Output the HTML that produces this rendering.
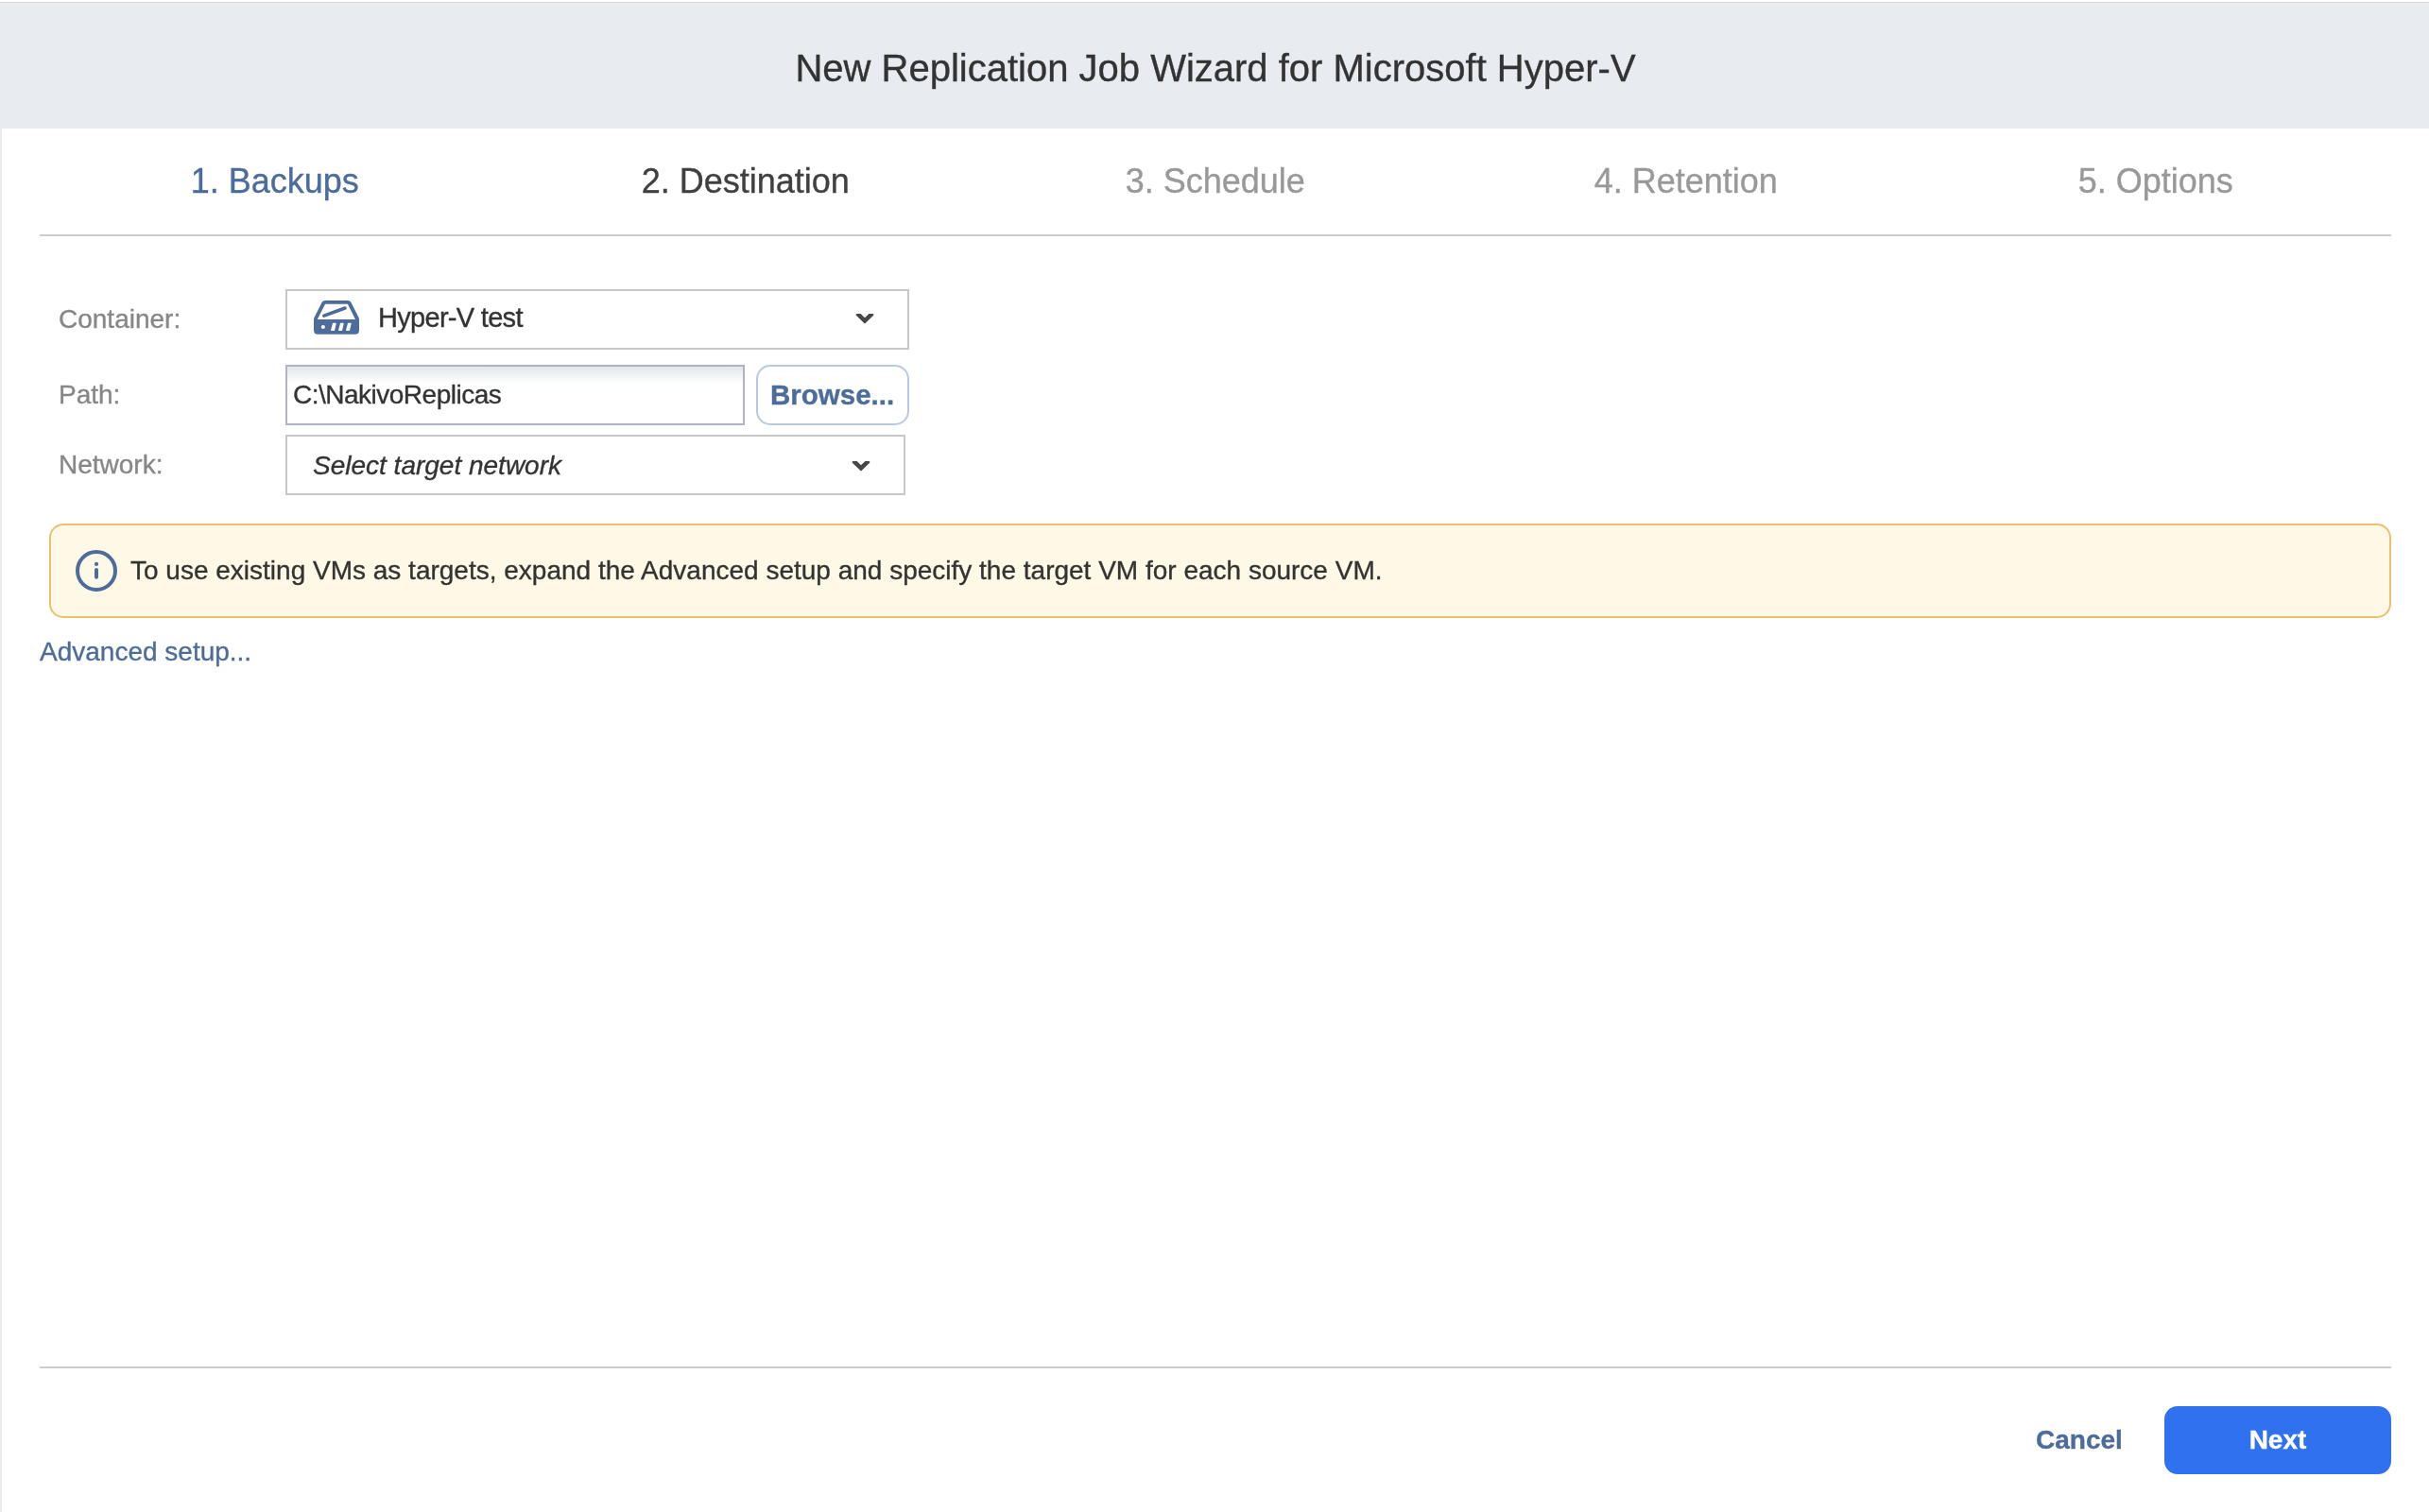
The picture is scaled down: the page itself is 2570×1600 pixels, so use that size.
<!DOCTYPE html>
<html>
<head>
<meta charset="utf-8">
<style>
html,body{margin:0;padding:0;}
body{width:2570px;height:1600px;position:relative;overflow:hidden;background:#ffffff;font-family:"Liberation Sans",sans-serif;}
.abs{position:absolute;white-space:nowrap;line-height:1;will-change:transform;-webkit-text-stroke:0.35px currentColor;}
#topline{position:absolute;left:0;top:2px;width:2570px;height:1px;background:#d4d4d4;}
#header{position:absolute;left:0;top:4px;width:2570px;height:132px;background:#e8ebf0;}
#topline2{position:absolute;left:0;top:3px;width:2570px;height:1px;background:#eff0f1;}
#leftbar{position:absolute;left:0;top:136px;width:2px;height:1464px;background:#e8ebf0;}
#title{left:0;width:2572px;text-align:center;top:51.8px;font-size:40px;color:#333333;}
.step{top:173.6px;font-size:36px;width:497.6px;text-align:center;}
.sep{position:absolute;left:42px;width:2488px;height:2px;background:#cccccc;}
.label{font-size:28px;color:#878787;left:62px;}
.box{position:absolute;box-sizing:border-box;border:2px solid #c8c8c8;background:#fff;}
.inp{font-size:28px;color:#333333;}
.chev{position:absolute;}
#banner{position:absolute;left:52px;top:554px;width:2478px;height:100px;box-sizing:border-box;border:2px solid #e8c270;border-radius:15px;background:#fdf9e6;}
.link{color:#4c6c9b;}
#next{position:absolute;left:2290px;top:1488px;width:240px;height:72px;border-radius:14px;background:#2f71ef;}
</style>
</head>
<body>
<div id="topline"></div><div id="topline2"></div>
<div id="header"></div>
<div id="leftbar"></div>
<div id="title" class="abs">New Replication Job Wizard for Microsoft Hyper-V</div>

<div class="abs step" style="left:42px;color:#4c6c9b;">1. Backups</div>
<div class="abs step" style="left:539.6px;color:#404040;">2. Destination</div>
<div class="abs step" style="left:1037.2px;color:#999999;">3. Schedule</div>
<div class="abs step" style="left:1534.8px;color:#999999;">4. Retention</div>
<div class="abs step" style="left:2032.4px;color:#999999;">5. Options</div>
<div class="sep" style="top:248px;"></div>

<div class="abs label" style="top:324px;">Container:</div>
<div class="abs label" style="top:404px;">Path:</div>
<div class="abs label" style="top:478px;">Network:</div>

<div class="box" style="left:302px;top:306px;width:660px;height:64px;"></div>
<svg style="position:absolute;left:326px;top:312px;" width="60" height="48" viewBox="0 0 60 48">
  <g fill="#4d6c9b">
    <path d="M18 6 H42 Q44.5 6 45.6 8.3 L53.6 24.3 Q54 25 54 26.5 V37.5 Q54 41.7 49.8 41.7 H10.2 Q6 41.7 6 37.5 V26.5 Q6 25 6.4 24.3 L14.4 8.3 Q15.5 6 18 6 Z M18.1 9.8 L9.8 26 H50 L41.9 9.8 Z"/>
    <circle cx="15.9" cy="34" r="2.1" fill="#fff"/>
  </g>
  <line x1="16.8" y1="22.2" x2="39" y2="14" stroke="#4d6c9b" stroke-width="3.5" stroke-linecap="round"/>
  <g fill="#fff">
    <path d="M26.5 30.4 H29.1 L27.5 37.3 H24.7 Z" stroke="#fff" stroke-width="1.2" stroke-linejoin="round"/>
    <path d="M34.5 30.4 H37.1 L35.5 37.3 H32.7 Z" stroke="#fff" stroke-width="1.2" stroke-linejoin="round"/>
    <path d="M42.5 30.4 H45.1 L43.5 37.3 H40.7 Z" stroke="#fff" stroke-width="1.2" stroke-linejoin="round"/>
  </g>
</svg>
<div class="abs inp" style="left:400px;top:322.3px;font-size:29px;letter-spacing:-0.7px;">Hyper-V test</div>
<svg class="chev" style="left:900px;top:326px;" width="30" height="22" viewBox="0 0 30 22">
  <path d="M5.6 7.4 Q5.4 6.2 6.6 6.1 L10.6 5.9 L15 10.3 L19.4 5.9 L23.4 6.1 Q24.6 6.2 24.4 7.4 L15.6 16.1 Q15 16.7 14.4 16.1 Z" fill="#464646"/>
</svg>

<div class="box" style="left:302px;top:386px;width:486px;height:64px;border-color:#b0b2c6;background:linear-gradient(#e3e7e9,#ffffff 18px);"></div>
<div class="abs inp" style="left:310px;top:404px;letter-spacing:-0.5px;">C:\NakivoReplicas</div>
<div class="box" style="left:800px;top:386px;width:162px;height:64px;border-color:#b9c9e0;border-radius:15px;"></div>
<div class="abs" style="left:815px;top:403px;font-size:29.5px;font-weight:bold;color:#4c6c9b;">Browse...</div>

<div class="box" style="left:302px;top:460px;width:656px;height:64px;"></div>
<div class="abs inp" style="left:331px;top:479px;font-style:italic;">Select target network</div>
<svg class="chev" style="left:896px;top:482px;" width="30" height="22" viewBox="0 0 30 22">
  <path d="M5.6 7.4 Q5.4 6.2 6.6 6.1 L10.6 5.9 L15 10.3 L19.4 5.9 L23.4 6.1 Q24.6 6.2 24.4 7.4 L15.6 16.1 Q15 16.7 14.4 16.1 Z" fill="#464646"/>
</svg>

<div id="banner"></div>
<svg style="position:absolute;left:70px;top:570px;" width="65" height="70" viewBox="0 0 65 70">
  <circle cx="32" cy="34" r="20" fill="none" stroke="#4d6c9b" stroke-width="4"/>
  <circle cx="32" cy="26.9" r="2.1" fill="#4d6c9b"/>
  <line x1="32" y1="33" x2="32" y2="40.8" stroke="#4d6c9b" stroke-width="4" stroke-linecap="round"/>
</svg>
<div class="abs" style="left:138px;top:590px;font-size:28px;color:#333333;">To use existing VMs as targets, expand the Advanced setup and specify the target VM for each source VM.</div>

<div class="abs link" style="left:42px;top:676px;font-size:28px;">Advanced setup...</div>

<div class="sep" style="top:1446px;"></div>
<div class="abs" style="left:2154px;top:1510px;font-size:28px;font-weight:bold;color:#4c6c9b;">Cancel</div>
<div id="next"></div>
<div class="abs" style="left:2290px;width:240px;text-align:center;top:1510px;font-size:28px;font-weight:bold;color:#ffffff;">Next</div>
</body>
</html>
